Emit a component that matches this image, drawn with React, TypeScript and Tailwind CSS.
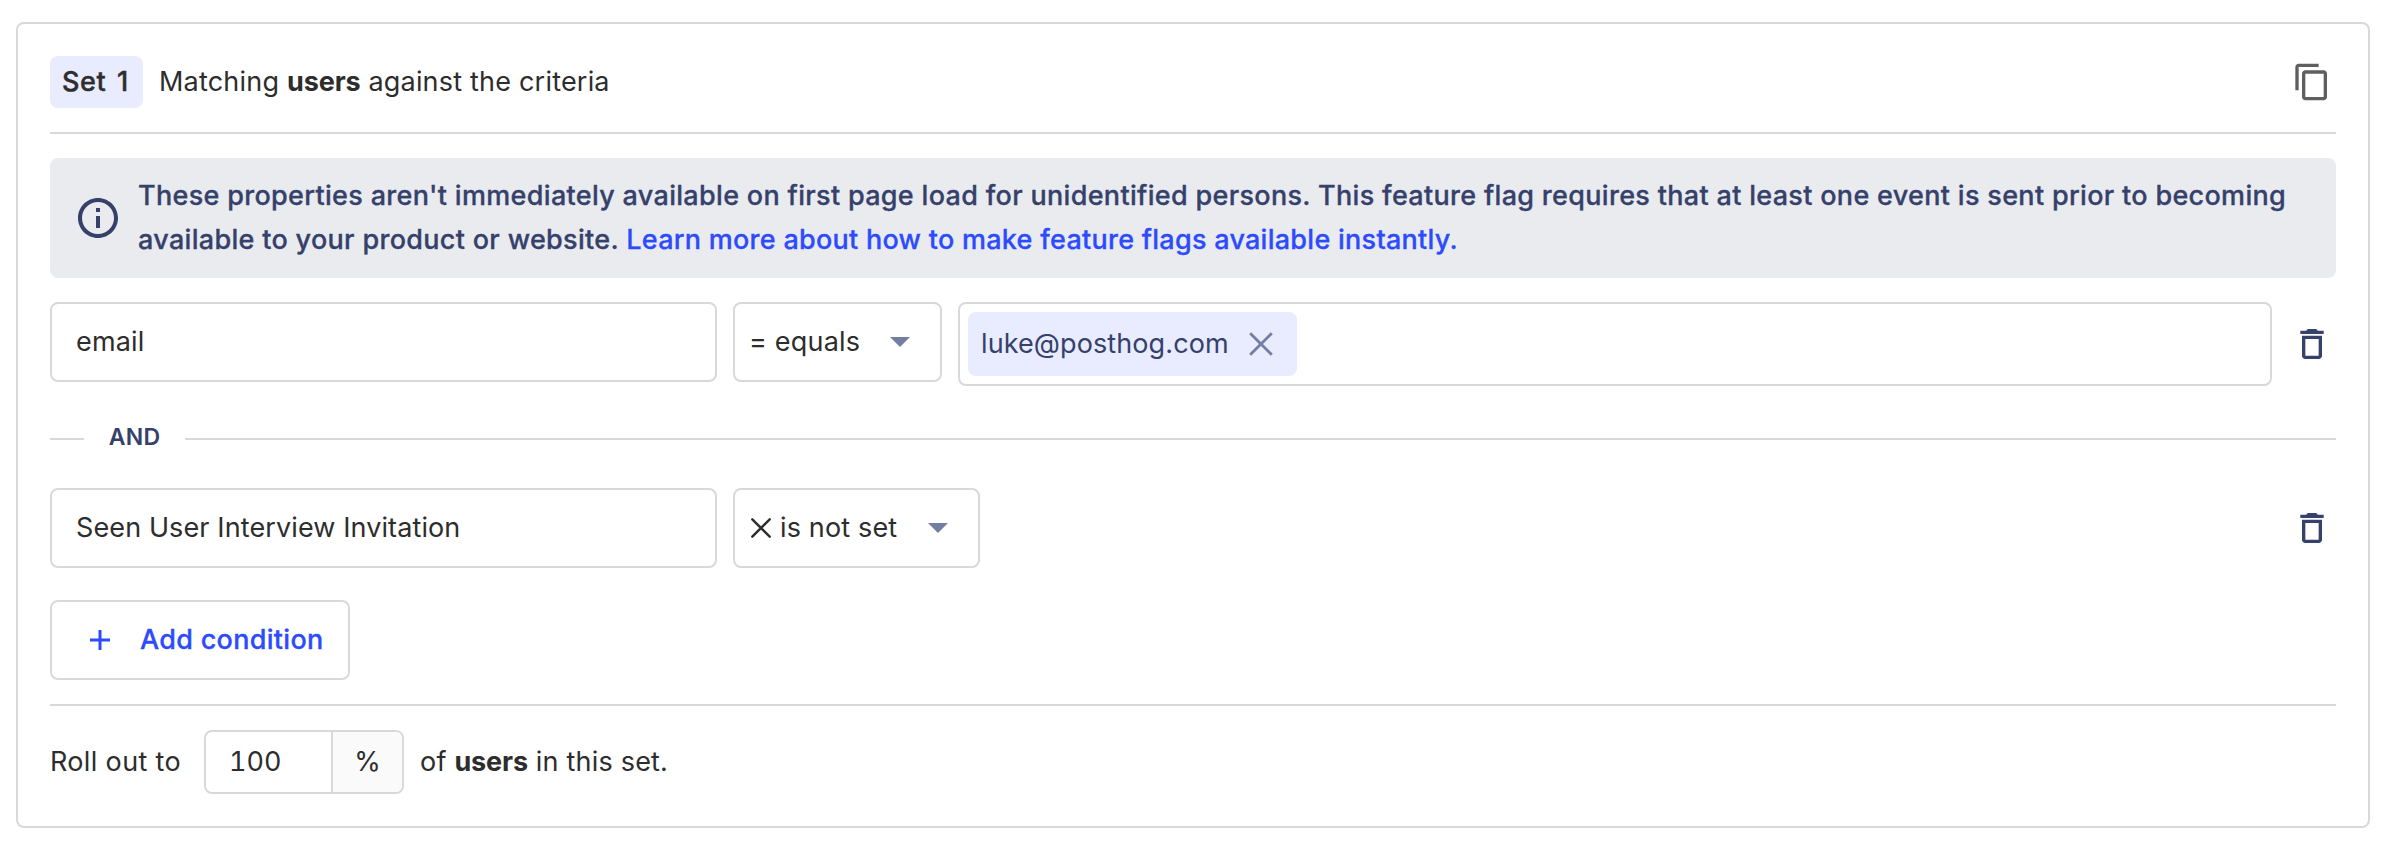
import type { ReactNode } from 'react'

function CopyIcon() {
  return (
    <svg viewBox="0 0 24 24" className="size-10 fill-[#5f5f5f]">
      <path d="M16 1H4c-1.1 0-2 .9-2 2v14h2V3h12V1zm3 4H8c-1.1 0-2 .9-2 2v14c0 1.1.9 2 2 2h11c1.1 0 2-.9 2-2V7c0-1.1-.9-2-2-2zm0 16H8V7h11v14z" />
    </svg>
  )
}

function InfoIcon() {
  return (
    <svg viewBox="0 0 24 24" className="size-12 shrink-0 fill-[#35416b]">
      <path d="M11 7h2v2h-2zm0 4h2v6h-2zm1-9C6.48 2 2 6.48 2 12s4.48 10 10 10 10-4.48 10-10S17.52 2 12 2zm0 18c-4.41 0-8-3.59-8-8s3.59-8 8-8 8 3.59 8 8-3.59 8-8 8z" />
    </svg>
  )
}

function TrashButton() {
  return (
    <button className="mr-1" aria-label="Delete">
      <svg viewBox="0 0 24 24" className="size-10 fill-[#35416b]">
        <path d="M6 19c0 1.1.9 2 2 2h8c1.1 0 2-.9 2-2V7H6v12zM8 9h8v10H8V9zm7.5-5l-1-1h-5l-1 1H5v2h14V4h-3.5z" />
      </svg>
    </button>
  )
}

function Caret() {
  return (
    <svg viewBox="0 0 20 10" className="h-2.5 w-5 fill-[#747ea3]">
      <path d="M0 0h20L10 10z" />
    </svg>
  )
}

function PropertyField({ children }: { children: ReactNode }) {
  return (
    <div className="flex h-20 w-[667px] items-center rounded-lg border-2 border-[#d9d9d9] px-6">{children}</div>
  )
}

function Rule() {
  return <div className="h-0.5 bg-[#d9d9d9]" />
}

export default function App() {
  return (
    <div className="h-[844px] bg-white pt-[22px] pr-[22px] pl-4 font-['Inter',sans-serif] text-[27px] leading-[44px] text-[#2d2d2d]">
      <section className="h-[806px] rounded-lg border-2 border-[#d9d9d9] px-8 pt-8">
        <header className="flex h-[52px] items-center">
          <span className="flex h-[52px] w-[93px] items-center rounded-lg bg-[#e9ecff] pl-3 font-medium tracking-[0.6px] [word-spacing:3px] [-webkit-text-stroke:0.4px]">
            Set 1
          </span>
          <p className="ml-4 flex-1 tracking-[0.2px]">
            Matching <b className="font-bold tracking-[-0.1px]">users</b> against the criteria
          </p>
          <button className="mr-1" aria-label="Copy">
            <CopyIcon />
          </button>
        </header>

        <div className="mt-6">
          <Rule />
        </div>

        <div className="mt-6 flex h-[120px] items-center rounded-lg bg-[#eaebef] pl-6 font-medium tracking-[0.315px] text-[#35416b] [-webkit-text-stroke:0.3px]">
          <InfoIcon />
          <p className="ml-4 whitespace-nowrap">
            These properties aren't immediately available on first page load for unidentified persons. This feature flag
            requires that at least one event is sent prior to becoming
            <br />
            available to your product or website.{' '}
            <a className="tracking-[0.27px] text-[#2c4bff]">
              Learn more about how to make feature flags available instantly.
            </a>
          </p>
        </div>

        <div className="mt-6 flex h-[84px] items-start gap-4">
          <PropertyField>
            <span className="tracking-[0.15px]">email</span>
          </PropertyField>
          <div className="flex h-20 w-[209px] items-center justify-between rounded-lg border-2 border-[#d9d9d9] pr-[30px] pl-[14px]">
            <span className="tracking-[0.2px]">= equals</span>
            <Caret />
          </div>
          <div className="h-[84px] flex-1 rounded-lg border-2 border-[#d9d9d9] p-2">
            <div className="flex h-16 w-[329px] items-center justify-between rounded-lg bg-[#e9ecff] pr-6 pl-[13px] text-[#35416b]">
              <span className="tracking-[0.1px]">luke@posthog.com</span>
              <svg viewBox="0 0 24 24" className="size-6 fill-none stroke-[#747ea3] stroke-[2.8]">
                <path d="M1.2 1.2l21.6 21.6M22.8 1.2L1.2 22.8" />
              </svg>
            </div>
          </div>
          <div className="ml-1 flex h-[84px] items-center">
            <TrashButton />
          </div>
        </div>

        <div className="flex h-[102px] items-center">
          <div className="mt-1 h-0.5 w-[34px] bg-[#d9d9d9]" />
          <span className="w-[101px] text-center text-[23px] font-semibold tracking-[0.3px] text-[#35416b]">AND</span>
          <div className="mt-1 h-0.5 flex-1 bg-[#d9d9d9]" />
        </div>

        <div className="flex h-20 items-center gap-4">
          <PropertyField>
            <span className="tracking-[0.11px]">Seen User Interview Invitation</span>
          </PropertyField>
          <div className="flex h-20 w-[247px] items-center rounded-lg border-2 border-[#d9d9d9] pr-[30px] pl-4">
            <svg viewBox="0 0 20 20" className="size-5 fill-none stroke-[#2d2d2d] stroke-[2.4]" strokeLinecap="round">
              <path d="M1.3 1.3l17.4 17.4M18.7 1.3L1.3 18.7" />
            </svg>
            <span className="ml-[9px] flex-1 tracking-[0.15px]">is not set</span>
            <Caret />
          </div>
          <div className="ml-auto flex items-center">
            <TrashButton />
          </div>
        </div>

        <button className="mt-8 flex h-20 w-[300px] items-center rounded-lg border-2 border-[#d9d9d9] pl-[38px] font-medium tracking-[0.3px] text-[#2c4bff] [-webkit-text-stroke:0.3px]">
          <svg viewBox="0 0 20 20" className="size-5 fill-none stroke-[#2c4bff] stroke-3">
            <path d="M10 0v20M0 10h20" />
          </svg>
          <span className="ml-[30px]">Add condition</span>
        </button>

        <div className="mt-6">
          <Rule />
        </div>

        <div className="mt-6 flex h-16 items-center">
          <span className="w-[154px] tracking-[0.35px]">Roll out to</span>
          <div className="flex h-16 w-[200px] overflow-hidden rounded-lg border-2 border-[#d9d9d9]">
            <div className="flex flex-1 items-center pl-[23px] tabular-nums">100</div>
            <div className="flex w-[71px] items-center justify-center border-l-2 border-[#d9d9d9] bg-[#fafafa]">%</div>
          </div>
          <span className="ml-4 tracking-[0.2px]">
            of <b className="font-bold tracking-[-0.1px]">users</b> in this set.
          </span>
        </div>
      </section>
    </div>
  )
}
